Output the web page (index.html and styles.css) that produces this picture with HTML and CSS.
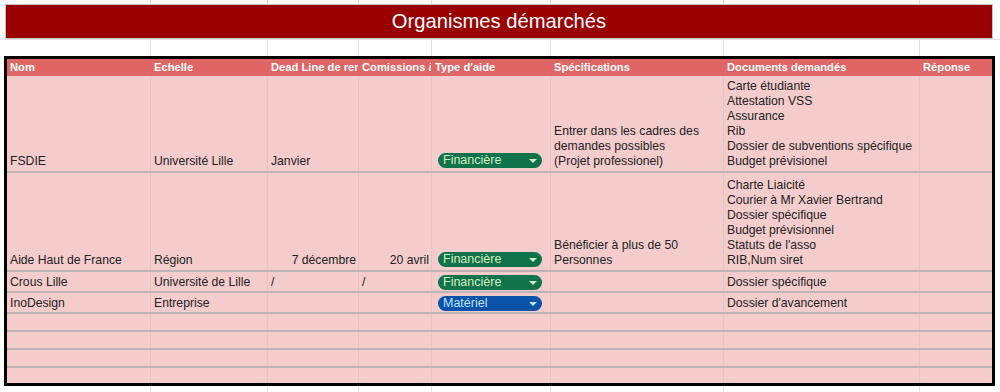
FILE: index.html
```html
<!DOCTYPE html>
<html lang="fr">
<head>
<meta charset="utf-8">
<title>Organismes démarchés</title>
<link rel="stylesheet" href="styles.css">
</head>
<body>
<div class="sheet">
  <div class="title">Organismes démarchés</div>
  <div class="spacer"></div>
  <div class="frame">
    <div class="row head">
      <div class="cell">Nom</div>
      <div class="cell">Echelle</div>
      <div class="cell">Dead Line de rendu</div>
      <div class="cell">Comissions à venir</div>
      <div class="cell">Type d'aide</div>
      <div class="cell">Spécifications</div>
      <div class="cell">Documents demandés</div>
      <div class="cell">Réponse</div>
    </div>
    <div class="row h1">
      <div class="cell">FSDIE</div>
      <div class="cell">Université Lille</div>
      <div class="cell">Janvier</div>
      <div class="cell"></div>
      <div class="cell"><span class="chip green">Financière<i class="tri"></i></span></div>
      <div class="cell"><span>Entrer dans les cadres des</span><span>demandes possibles</span><span>(Projet professionel)</span></div>
      <div class="cell"><span>Carte étudiante</span><span>Attestation VSS</span><span>Assurance</span><span>Rib</span><span>Dossier de subventions spécifique</span><span>Budget prévisionel</span></div>
      <div class="cell"></div>
    </div>
    <div class="row h2">
      <div class="cell">Aide Haut de France</div>
      <div class="cell">Région</div>
      <div class="cell right">7 décembre</div>
      <div class="cell right">20 avril</div>
      <div class="cell"><span class="chip green">Financière<i class="tri"></i></span></div>
      <div class="cell"><span>Bénéficier à plus de 50</span><span>Personnes</span></div>
      <div class="cell"><span>Charte Liaicité</span><span>Courier à Mr Xavier Bertrand</span><span>Dossier spécifique</span><span>Budget prévisionnel</span><span>Statuts de l'asso</span><span>RIB,Num siret</span></div>
      <div class="cell"></div>
    </div>
    <div class="row h3">
      <div class="cell">Crous Lille</div>
      <div class="cell">Université de Lille</div>
      <div class="cell">/</div>
      <div class="cell">/</div>
      <div class="cell"><span class="chip green">Financière<i class="tri"></i></span></div>
      <div class="cell"></div>
      <div class="cell">Dossier spécifique</div>
      <div class="cell"></div>
    </div>
    <div class="row h3">
      <div class="cell">InoDesign</div>
      <div class="cell">Entreprise</div>
      <div class="cell"></div>
      <div class="cell"></div>
      <div class="cell"><span class="chip blue">Matériel<i class="tri"></i></span></div>
      <div class="cell"></div>
      <div class="cell">Dossier d'avancement</div>
      <div class="cell"></div>
    </div>
    <div class="row empty"><div class="cell"></div><div class="cell"></div><div class="cell"></div><div class="cell"></div><div class="cell"></div><div class="cell"></div><div class="cell"></div><div class="cell"></div></div>
    <div class="row empty"><div class="cell"></div><div class="cell"></div><div class="cell"></div><div class="cell"></div><div class="cell"></div><div class="cell"></div><div class="cell"></div><div class="cell"></div></div>
    <div class="row empty"><div class="cell"></div><div class="cell"></div><div class="cell"></div><div class="cell"></div><div class="cell"></div><div class="cell"></div><div class="cell"></div><div class="cell"></div></div>
    <div class="row empty last"><div class="cell"></div><div class="cell"></div><div class="cell"></div><div class="cell"></div><div class="cell"></div><div class="cell"></div><div class="cell"></div><div class="cell"></div></div>
  </div>
</div>
</body>
</html>
```

FILE: styles.css
```css
* { box-sizing: border-box; }

html, body {
  margin: 0;
  height: 100%;
}

body {
  width: 1000px;
  font-family: "Liberation Sans", Arial, sans-serif;
  font-size: 12.2px;
  color: #222;
  background:
    linear-gradient(#e2e2e2, #e2e2e2) 150px 0 / 1px 100% no-repeat,
    linear-gradient(#e2e2e2, #e2e2e2) 267px 0 / 1px 100% no-repeat,
    linear-gradient(#e2e2e2, #e2e2e2) 358px 0 / 1px 100% no-repeat,
    linear-gradient(#e2e2e2, #e2e2e2) 431px 0 / 1px 100% no-repeat,
    linear-gradient(#e2e2e2, #e2e2e2) 550px 0 / 1px 100% no-repeat,
    linear-gradient(#e2e2e2, #e2e2e2) 723px 0 / 1px 100% no-repeat,
    linear-gradient(#e2e2e2, #e2e2e2) 919px 0 / 1px 100% no-repeat,
    linear-gradient(#e2e2e2, #e2e2e2) 0 39px / 100% 1px no-repeat,
    #fff;
}

.sheet {
  padding: 4px 5px 0 4px;
}

.title {
  margin: 0 2px 0 1px;
  height: 35px;
  border: 1px solid #c4c4c4;
  background: #990000;
  color: #fff;
  font-size: 20.2px;
  display: flex;
  align-items: center;
  justify-content: center;
  padding-bottom: 1px;
}

.spacer {
  height: 17px;
}

.frame {
  border: 3px solid #000;
  background: #f4cccc;
}

.row {
  display: grid;
  grid-template-columns: 143px 117px 91px 73px 119px 173px 196px 73px;
  border-bottom: 2px solid #bdb5b5;
}

.row.last { border-bottom: 0; }

.cell {
  display: flex;
  flex-direction: column;
  justify-content: flex-end;
  padding: 0 3px 2px 3px;
  line-height: 15px;
  white-space: nowrap;
  overflow: hidden;
  border-left: 1px solid #e3c4c4;
}

.cell:first-child { border-left: 0; }

.cell.right { align-items: flex-end; padding-right: 2px; }

.head {
  background: #e06666;
  color: #fff;
  font-weight: bold;
  font-size: 11.2px;
  height: 17px;
  border-bottom: 0;
}

.head .cell {
  border-left-color: #e06666;
  padding-bottom: 1px;
}

.h1 { height: 97px; }
.h2 { height: 99px; }
.h3 { height: 21px; }
.h3 .cell { padding-bottom: 1px; }
.empty { height: 18px; }
.empty.last { height: 15px; }

.chip {
  display: flex;
  align-items: center;
  justify-content: space-between;
  width: 104px;
  height: 15px;
  margin: 0 0 1px 3px;
  padding: 0 5px 0 5px;
  border-radius: 8px;
  line-height: 15px;
  font-size: 12.5px;
}

.h3 .chip { margin-bottom: 0; }

.chip.green { background: #11734b; color: #d4edbc; }
.chip.blue { background: #0a53a8; color: #bfe1f6; }

.tri {
  width: 0;
  height: 0;
  border-left: 4px solid transparent;
  border-right: 4px solid transparent;
  border-top: 4px solid currentColor;
}
```
